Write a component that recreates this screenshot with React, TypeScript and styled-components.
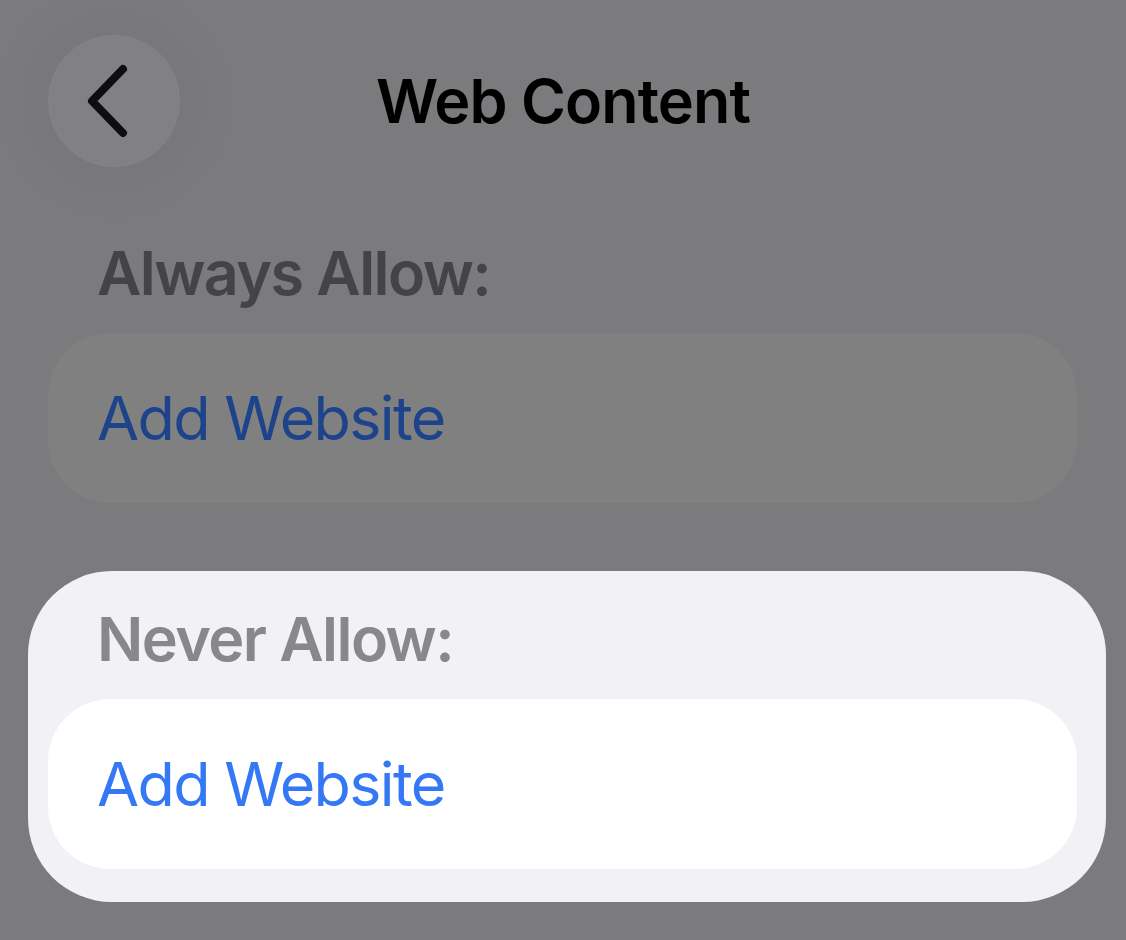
import React from 'react';
import styled, { createGlobalStyle } from 'styled-components';

const GlobalStyle = createGlobalStyle`
    html, body {
        margin: 0;
        padding: 0;
        background: #7b7b7e;
    }
    body {
        font-family: Inter, "Noto Sans", "Liberation Sans", sans-serif;
        -webkit-font-smoothing: antialiased;
    }
`;

interface SectionProps {
    title: string;
    active?: boolean;
}

const Section = ({ title, active = false }: SectionProps) => {
    return (
        <SectionStyle $active={active}>
            <Label $active={active}>{title}</Label>
            <Card $active={active}>
                <LinkText $active={active}>Add Website</LinkText>
            </Card>
        </SectionStyle>
    );
};

const App = () => {
    return (
        <>
            <GlobalStyle />
            <Page>
                <Header>
                    <BackButton aria-label="Back">
                        <svg width="48" height="76" viewBox="0 0 48 76" fill="none">
                            <path
                                d="M37 6 L6 38 L37 70"
                                stroke="#0e0e10"
                                strokeWidth="8"
                                strokeLinecap="round"
                                strokeLinejoin="round"
                            />
                        </svg>
                    </BackButton>
                    <Title>Web Content</Title>
                </Header>
                <Sections>
                    <Section title="Always Allow:" />
                    <Section title="Never Allow:" active />
                </Sections>
            </Page>
        </>
    );
};

const Page = styled.div`
    width: 1126px;
    height: 940px;
    overflow: hidden;
    background: #7b7b7e;
`;

const Header = styled.div`
    display: flex;
    align-items: center;
    justify-content: center;
    position: relative;
    height: 132px;
    padding: 35px 48px 38px;
`;

const BackButton = styled.button`
    position: absolute;
    left: 48px;
    top: 35px;
    width: 132px;
    height: 132px;
    border-radius: 50%;
    border: 1px solid #858587;
    background: #818183;
    box-shadow: 0 0 60px 20px rgba(0, 0, 0, 0.035);
    display: flex;
    align-items: center;
    justify-content: center;
    padding: 0 8px 0 0;
    cursor: pointer;
`;

const Title = styled.h1`
    margin: 0;
    font-size: 61px;
    font-weight: 600;
    letter-spacing: -0.9px;
    color: #000;
`;

const Sections = styled.div`
    display: flex;
    flex-direction: column;
    gap: 35px;
    padding: 0 20px 0 28px;
`;

const SectionStyle = styled.div<{ $active: boolean }>`
    display: flex;
    flex-direction: column;
    gap: 23px;
    padding: 32px 29px 33px 20px;
    border-radius: 84px;
    background: ${({ $active }) => ($active ? '#f1f1f6' : 'transparent')};
`;

const Label = styled.div<{ $active: boolean }>`
    padding-left: 49px;
    font-size: 61px;
    line-height: 73px;
    font-weight: 600;
    letter-spacing: -1.55px;
    color: ${({ $active }) => ($active ? '#88888c' : '#444446')};
`;

const Card = styled.div<{ $active: boolean }>`
    display: flex;
    align-items: center;
    height: 170px;
    padding-left: 49px;
    border-radius: 62px;
    background: ${({ $active }) => ($active ? '#ffffff' : '#808081')};
`;

const LinkText = styled.span<{ $active: boolean }>`
    font-size: 61px;
    font-weight: 400;
    letter-spacing: -1.65px;
    color: ${({ $active }) => ($active ? '#3478f6' : '#1d438b')};
`;

export default App;
